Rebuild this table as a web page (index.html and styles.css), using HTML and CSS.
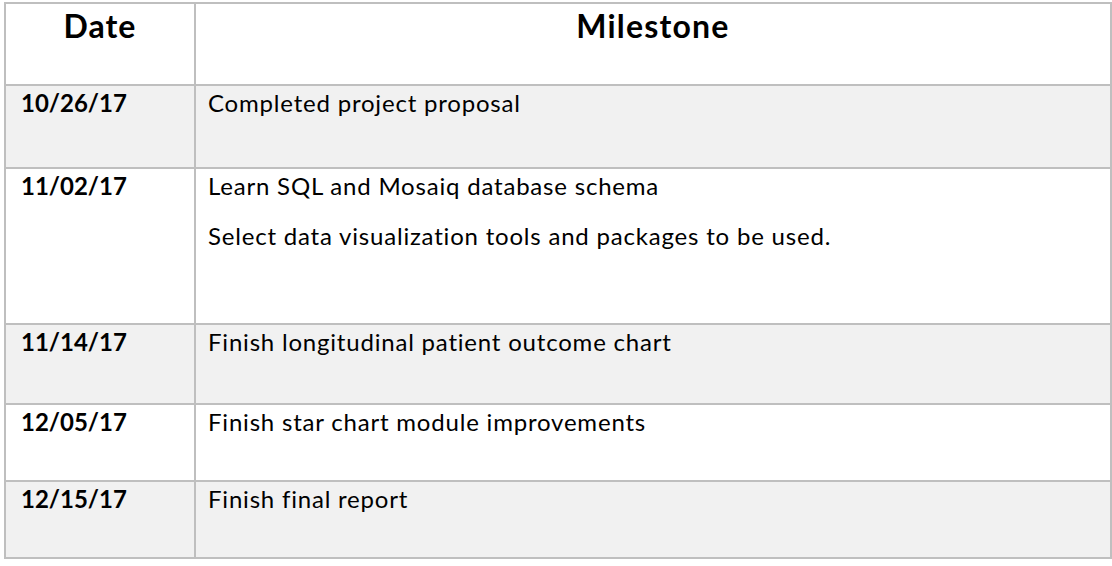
FILE: index.html
```html
<!DOCTYPE html>
<html lang="en">
<head>
<meta charset="utf-8">
<title>Milestones</title>
<link rel="stylesheet" href="styles.css">
</head>
<body>
<div class="table">
  <div class="cell head date">Date</div>
  <div class="cell head">Milestone</div>

  <div class="cell date shade">10/26/17</div>
  <div class="cell shade"><p>Completed project proposal</p></div>

  <div class="cell date">11/02/17</div>
  <div class="cell"><p>Learn SQL and Mosaiq database schema</p><p>Select data visualization tools and packages to be used.</p></div>

  <div class="cell date shade">11/14/17</div>
  <div class="cell shade"><p>Finish longitudinal patient outcome chart</p></div>

  <div class="cell date">12/05/17</div>
  <div class="cell"><p>Finish star chart module improvements</p></div>

  <div class="cell date shade">12/15/17</div>
  <div class="cell shade"><p>Finish final report</p></div>
</div>
</body>
</html>
```

FILE: styles.css
```css
html, body {
  margin: 0;
  padding: 0;
  background: #ffffff;
}

body {
  font-family: "Lato", "Open Sans", sans-serif;
  color: #000000;
}

.table {
  box-sizing: border-box;
  width: 1108px;
  margin: 2px 0 0 4px;
  border-top: 2px solid #bfbfbf;
  border-left: 2px solid #bfbfbf;
  display: grid;
  grid-template-columns: 190px 1fr;
  grid-template-rows: 82px 83px 156px 80px 77px 77px;
}

.cell {
  box-sizing: border-box;
  border-right: 2px solid #bfbfbf;
  border-bottom: 2px solid #bfbfbf;
  padding: 2px 12px 0 12px;
  font-size: 24px;
  line-height: 30px;
  letter-spacing: 0.8px;
}

.cell p {
  margin: 0 0 20px 0;
}

.date {
  font-weight: 700;
  padding-left: 15px;
  letter-spacing: 0;
}

.head {
  font-size: 32px;
  font-weight: 700;
  text-align: center;
  line-height: 40px;
  padding: 2px 0 0 0;
  letter-spacing: 1.2px;
}

.head.date {
  letter-spacing: 1px;
  padding-left: 0;
}

.shade {
  background: #f1f1f1;
}
```
